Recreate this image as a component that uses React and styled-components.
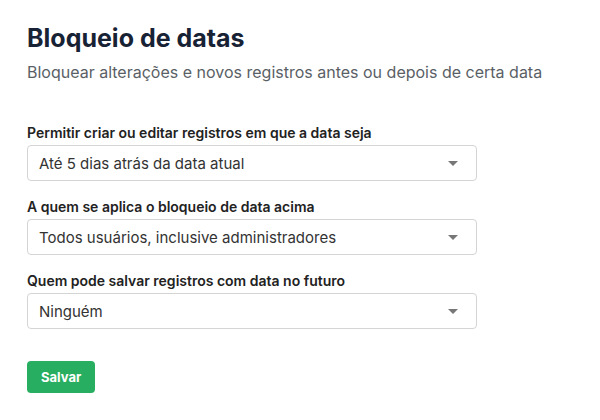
import React from 'react';
import styled, { createGlobalStyle } from 'styled-components';

const GlobalStyle = createGlobalStyle`
  body {
    margin: 0;
    background: #fff;
    font-family: Inter, "Noto Sans", sans-serif;
  }
`;

const Page = styled.div`
  padding: 22px 27px;
  width: 450px;
  display: flex;
  flex-direction: column;
`;

const Title = styled.h1`
  margin: 0;
  font-size: 25px;
  font-weight: 700;
  color: #182235;
  line-height: 32px;
`;

const Subtitle = styled.p`
  margin: 7px 0 0;
  font-size: 16px;
  color: #5a5f66;
  line-height: 22px;
  white-space: nowrap;
`;

const Form = styled.div`
  display: flex;
  flex-direction: column;
  gap: 16px;
  margin-top: 40px;
`;

const Field = styled.div`
  display: flex;
  flex-direction: column;
  gap: 2px;
`;

const Label = styled.label`
  font-size: 14px;
  font-weight: 600;
  color: #222;
  line-height: 20px;
`;

const Select = styled.div`
  height: 34px;
  border: 1px solid #d4d4d4;
  border-radius: 4px;
  display: flex;
  align-items: center;
  justify-content: space-between;
  padding: 0 18px 0 11px;
  font-size: 15px;
  color: #333;
`;

const Caret = styled.span`
  width: 0;
  height: 0;
  border-left: 5px solid transparent;
  border-right: 5px solid transparent;
  border-top: 5px solid #777;
`;

const Button = styled.button`
  margin-top: 32px;
  align-self: flex-start;
  height: 32px;
  padding: 0 14px;
  border: none;
  border-radius: 4px;
  background: #27ae60;
  color: #fff;
  font-family: inherit;
  font-size: 13px;
  font-weight: 700;
`;

const fields = [
  ['Permitir criar ou editar registros em que a data seja', 'Até 5 dias atrás da data atual'],
  ['A quem se aplica o bloqueio de data acima', 'Todos usuários, inclusive administradores'],
  ['Quem pode salvar registros com data no futuro', 'Ninguém'],
];

export default function App() {
  return (
    <>
      <GlobalStyle />
      <Page>
        <Title>Bloqueio de datas</Title>
        <Subtitle>Bloquear alterações e novos registros antes ou depois de certa data</Subtitle>
        <Form>
          {fields.map(([label, value]) => (
            <Field key={label}>
              <Label>{label}</Label>
              <Select>
                {value}
                <Caret />
              </Select>
            </Field>
          ))}
        </Form>
        <Button>Salvar</Button>
      </Page>
    </>
  );
}
